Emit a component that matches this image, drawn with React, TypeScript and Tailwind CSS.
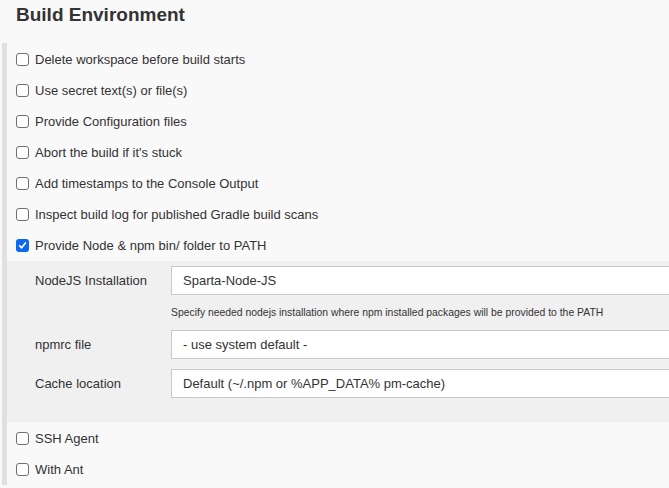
import React from "react";

function Box({ checked }: { checked?: boolean }) {
  if (checked) {
    return (
      <span className="flex h-[13px] w-[13px] shrink-0 items-center justify-center rounded-[3px] bg-[#0b68f0]">
        <svg width="9" height="9" viewBox="0 0 10 10">
          <path d="M1.8 5.3 L4 7.6 L8.3 2.2" fill="none" stroke="#fff" strokeWidth="1.9" strokeLinecap="round" strokeLinejoin="round" />
        </svg>
      </span>
    );
  }
  return <span className="h-[13px] w-[13px] shrink-0 rounded-[3px] border border-[#6f6f6f] bg-white" />;
}

function Row({ label, checked }: { label: string; checked?: boolean }) {
  return (
    <div className="flex h-[31px] items-center gap-[6px] pl-[9px]">
      <Box checked={checked} />
      <span>{label}</span>
    </div>
  );
}

function Field({ label, value }: { label: string; value: string }) {
  return (
    <div className="flex items-center">
      <div className="w-[164px] shrink-0 pl-[28px]">{label}</div>
      <div className="flex h-[29px] w-[520px] shrink-0 items-center border border-[#c9c9c9] bg-white pl-[11px]">
        {value}
      </div>
    </div>
  );
}

export default function App() {
  return (
    <div
      className="h-[488px] w-[669px] overflow-hidden bg-[#f9f9f9] text-[13px] text-[#333]"
      style={{ fontFamily: '"Liberation Sans", Arial, sans-serif' }}
    >
      <div className="flex h-[43px] items-start pl-[16px] pt-[3px]">
        <h1 className="text-[19px] font-bold leading-[24px] text-[#333]">Build Environment</h1>
      </div>
      <div className="ml-[2px] border-l-[5px] border-[#e0e0e0] pt-[1px]">
        <Row label="Delete workspace before build starts" />
        <Row label="Use secret text(s) or file(s)" />
        <Row label="Provide Configuration files" />
        <Row label="Abort the build if it's stuck" />
        <Row label="Add timestamps to the Console Output" />
        <Row label="Inspect build log for published Gradle build scans" />
        <Row label="Provide Node & npm bin/ folder to PATH" checked />
        <div className="flex flex-col bg-[#f0f0f0] pb-[24px] pt-[5px]">
          <Field label="NodeJS Installation" value="Sparta-Node-JS" />
          <div className="flex h-[35px] items-center pl-[164px] text-[10.4px] text-[#333]">
            Specify needed nodejs installation where npm installed packages will be provided to the PATH
          </div>
          <div className="flex flex-col gap-[10px]">
            <Field label="npmrc file" value="- use system default -" />
            <Field label="Cache location" value="Default (~/.npm or %APP_DATA% pm-cache)" />
          </div>
        </div>
        <div className="pt-[1px]">
          <Row label="SSH Agent" />
          <Row label="With Ant" />
        </div>
      </div>
    </div>
  );
}
